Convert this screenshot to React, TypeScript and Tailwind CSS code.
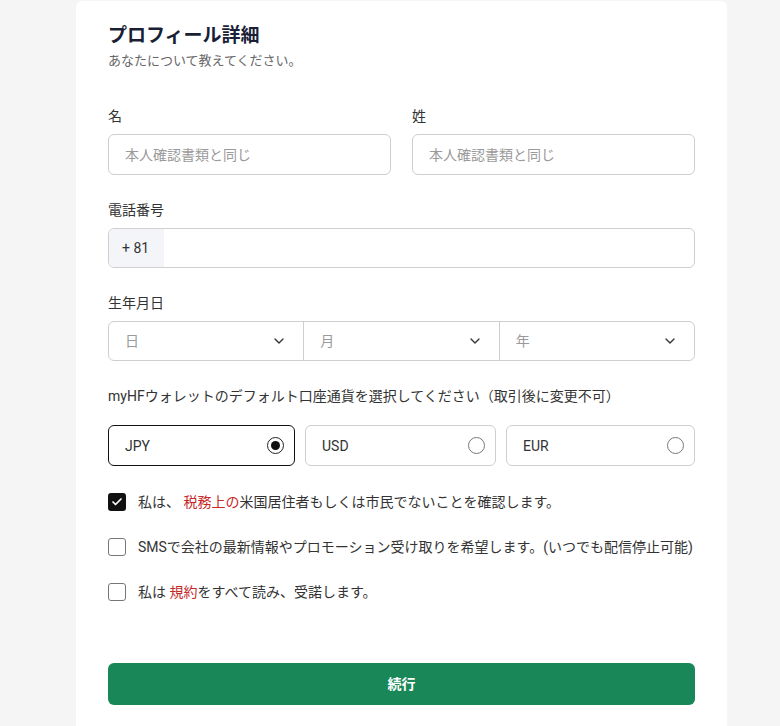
import { ChevronDown, Check } from "lucide-react";

const font = { fontFamily: 'Roboto, "Noto Sans CJK JP", sans-serif' };

function TextInput({ placeholder }: { placeholder: string }) {
  return (
    <div className="h-[41px] rounded-md border border-[#cfcfcf] bg-white px-4 flex items-center text-sm text-[#9a9a9a]">
      {placeholder}
    </div>
  );
}

function SelectCell({ label, last }: { label: string; last?: boolean }) {
  return (
    <div
      className={`flex-1 flex items-center justify-between pl-4 pr-4 text-sm text-[#9a9a9a] ${
        last ? "" : "border-r border-[#cfcfcf]"
      }`}
    >
      <span>{label}</span>
      <ChevronDown className="w-4 h-4 text-[#333]" strokeWidth={2} />
    </div>
  );
}

function Radio({ code, selected }: { code: string; selected?: boolean }) {
  return (
    <div
      className={`h-[41px] rounded-md border px-4 pr-[10px] flex items-center justify-between text-sm text-[#333] ${
        selected ? "border-[#111]" : "border-[#cfcfcf]"
      }`}
    >
      <span>{code}</span>
      {selected ? (
        <span className="w-[17px] h-[17px] rounded-full border border-[#222] flex items-center justify-center">
          <span className="w-[9px] h-[9px] rounded-full bg-[#111]" />
        </span>
      ) : (
        <span className="w-[17px] h-[17px] rounded-full border border-[#777]" />
      )}
    </div>
  );
}

function CheckRow({ checked, children }: { checked?: boolean; children: React.ReactNode }) {
  return (
    <div className="flex items-center gap-3 h-5 text-sm text-[#333]">
      {checked ? (
        <span className="w-[18px] h-[18px] rounded-[3px] bg-[#111] flex items-center justify-center shrink-0">
          <Check className="w-3 h-3 text-white" strokeWidth={3.5} />
        </span>
      ) : (
        <span className="w-[18px] h-[18px] rounded-[3px] border border-[#777] bg-white shrink-0" />
      )}
      <span className="whitespace-nowrap">{children}</span>
    </div>
  );
}

export default function App() {
  return (
    <div className="min-h-[726px] bg-[#f5f5f5] overflow-hidden" style={font}>
      <div className="ml-[76px] w-[651px] mt-px bg-white rounded-t-md px-8 pt-[21px] pb-10">
        <h1 className="text-[19px] leading-7 font-bold text-[#1a1f36]">プロフィール詳細</h1>
        <p className="text-[13px] leading-5 mt-[1px] text-[#666]">あなたについて教えてください。</p>

        <div className="grid grid-cols-2 gap-x-[21px] mt-[35px]">
          <div>
            <div className="text-sm leading-5 text-[#333]">名</div>
            <div className="mt-2">
              <TextInput placeholder="本人確認書類と同じ" />
            </div>
          </div>
          <div>
            <div className="text-sm leading-5 text-[#333]">姓</div>
            <div className="mt-2">
              <TextInput placeholder="本人確認書類と同じ" />
            </div>
          </div>
        </div>

        <div className="mt-[25px] text-sm leading-5 text-[#333]">電話番号</div>
        <div className="mt-2 h-10 rounded-md border border-[#cfcfcf] flex overflow-hidden">
          <div className="w-[55px] bg-[#f3f5f8] flex items-center pl-[13px] text-sm text-[#333]">+ 81</div>
          <div className="flex-1" />
        </div>

        <div className="mt-[25px] text-sm leading-5 text-[#333]">生年月日</div>
        <div className="mt-2 h-10 rounded-md border border-[#cfcfcf] flex">
          <SelectCell label="日" />
          <SelectCell label="月" />
          <SelectCell label="年" last />
        </div>

        <div className="mt-[25px] text-sm leading-5 text-[#333]">
          myHFウォレットのデフォルト口座通貨を選択してください（取引後に変更不可）
        </div>
        <div className="mt-[19px] grid grid-cols-[187px_191px_189px] gap-[10px]">
          <Radio code="JPY" selected />
          <Radio code="USD" />
          <Radio code="EUR" />
        </div>

        <div className="mt-[26px] flex flex-col gap-[25px]">
          <CheckRow checked>
            私は、 <span className="text-[#c62828]">税務上の</span>米国居住者もしくは市民でないことを確認します。
          </CheckRow>
          <CheckRow>SMSで会社の最新情報やプロモーション受け取りを希望します。(いつでも配信停止可能)</CheckRow>
          <CheckRow>
            私は <span className="text-[#c62828]">規約</span>をすべて読み、受諾します。
          </CheckRow>
        </div>

        <button className="mt-[61px] w-full h-[42px] rounded-md bg-[#1a8758] text-white text-sm font-bold">
          続行
        </button>
      </div>
    </div>
  );
}
